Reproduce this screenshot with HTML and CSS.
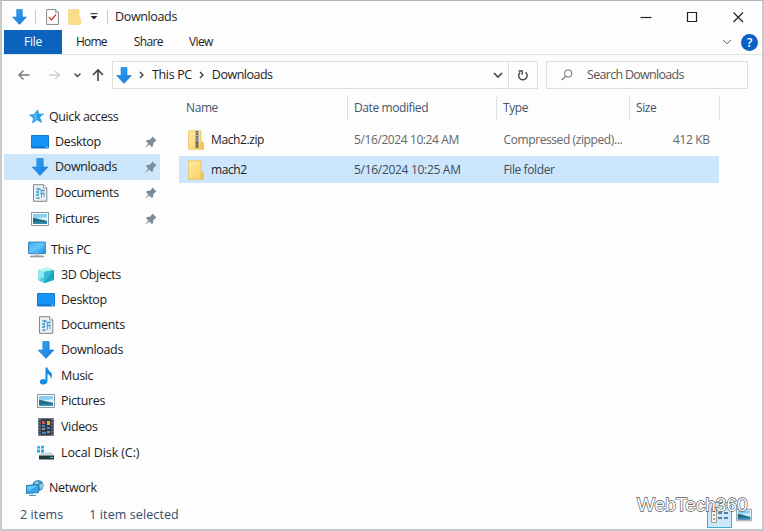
FILE: index.html
```html
<!DOCTYPE html>
<html lang="en">
<head>
<meta charset="utf-8">
<title>Downloads</title>
<link rel="stylesheet" href="styles.css">
</head>
<body>
<svg class="defs" width="0" height="0" aria-hidden="true">
  <defs>
    <linearGradient id="blue" x1="0" y1="0" x2="1" y2="1"><stop offset="0" stop-color="#35a5f5"/><stop offset="1" stop-color="#1479d8"/></linearGradient>
    <linearGradient id="gold" x1="0" y1="0" x2="1" y2="1"><stop offset="0" stop-color="#ffe9a2"/><stop offset="1" stop-color="#f7cf62"/></linearGradient>
    <linearGradient id="screen" x1="0" y1="0" x2="1" y2="1"><stop offset="0" stop-color="#3fa9f0"/><stop offset=".5" stop-color="#68c5fb"/><stop offset="1" stop-color="#168be0"/></linearGradient>
    <symbol id="down" viewBox="0 0 16 17"><path d="M5 .5h6v8h4.500L8 16.500.5 8.500H5z" fill="url(#blue)" stroke="#1c7fd0" stroke-width=".6"/></symbol>
    <symbol id="star" viewBox="0 0 15 15"><path d="M8.500.8l1.300 4.500 4.700-.4-3.800 3.200 2 5.400-4.700-2.800L3.600 14l.9-5L.6 6l4.700-.4z" fill="#239be9" stroke="#239be9" stroke-width=".7"/><path d="M8 3v7l-3 2 .6-4L3 6.500l3-.4z" fill="#54bcf6"/></symbol>
    <symbol id="desktop" viewBox="0 0 18 14"><path d="M.5.500h17v12.500H.500z" fill="#1595f5" stroke="#1678cf"/><path d="M1 12h13" stroke="#0e65b6"/><path d="M14 12h3" stroke="#5eb5f5"/></symbol>
    <symbol id="doc" viewBox="0 0 15 18"><path d="M1 .7h10l3.300 3.300v13.300H1z" fill="#e9eff2" stroke="#7d8990"/><path d="M11 .7V4h3.300" fill="#fff" stroke="#7d8990" stroke-width=".8"/><path d="M4 5h4M3.500 8h3M8 6.500h4M3.500 11h3M8 9.500h4M4 14h3" stroke="#3b91c5" stroke-width="1.300"/><path d="M6 5v6M9 6v8M11.500 9v4" stroke="#58aeda"/></symbol>
    <symbol id="picture" viewBox="0 0 18 14"><path d="M.5.500h17v13H.500z" fill="#f9fbfc" stroke="#8998a2"/><path d="M2 2h14v10H2z" fill="#8bcef4"/><path d="M2 5l5 1 9-1v4L8 7z" fill="#daeff7"/><path d="M2 6c4 0 8 2 14 3v3H2z" fill="#216d86"/><path d="M2 10h14v2H2z" fill="#3688b4"/></symbol>
    <symbol id="pc" viewBox="0 0 18 17"><path d="M.6.600h16.800v11.500H.600z" fill="url(#screen)" stroke="#3585b8"/><path d="M7 12h4v2H7z" fill="#b7c5cc"/><path d="M3 14h12l1.500 1.800H1.500z" fill="#8c9ba5"/></symbol>
    <symbol id="cube" viewBox="0 0 18 18"><path d="M1 4l9-3 7 3-7 3z" fill="#b8f3f6"/><path d="M1 4l6 2v11l-6-3z" fill="#4fd0dd"/><path d="M7 6l10-2v10L8 17H7z" fill="#18a6c1"/><path d="M1 4l6 2v5l-6 3z" fill="#92e8ec"/><path d="M7 6l10-2-5 6-5 7z" fill="#38bed3"/></symbol>
    <symbol id="music" viewBox="0 0 13 17"><path d="M6 .5h1.800c.2 3 4.700 4 4.300 7.500-.1 1.500-.8 2.500-1.600 3.300.7-2.800-.5-4.300-2.600-4.800v6.700c0 4.300-6.900 4.300-7.200 1.100C.5 11.500 4 10.600 6 12z" fill="#158ce3"/></symbol>
    <symbol id="video" viewBox="0 0 16 18"><path d="M.5.500h15v17H.500z" fill="#363b48" stroke="#71757c"/><path d="M2 1v16M14 1v16" stroke="#8c9096" stroke-width="1.200" stroke-dasharray="1.500 1.500"/><path d="M4 3h3v3H4z" fill="#c55854"/><path d="M9 3h3v4H9z" fill="#dfb14a"/><path d="M4 7h3v2H4zM9 9h3v2H9zM4 14h4v2H4z" fill="#3c85cf"/><path d="M4 10h3v2H4zM9 13h3v2H9z" fill="#8094a9"/></symbol>
    <symbol id="disk" viewBox="0 0 18 15"><path d="M0 1l3-.5V3H0zM4 .4L7 0v3H4zM0 4h3v3H0zM4 4h3v3.500H4z" fill="#1aafe9"/><path d="M4 7h11l2 3H2z" fill="#c9dbe0"/><path d="M2 10h15v4H2z" fill="#24383e"/><path d="M13 12h3" stroke="#48d6b1"/></symbol>
    <symbol id="network" viewBox="0 0 18 17"><circle cx="12" cy="6" r="5.600" fill="#3a8abe"/><path d="M8 3l4-2 1 3-3 2zM13 5l4-1v4l-3 2z" fill="#8ac5dd"/><path d="M.6 6l12-1v8l-12 1z" fill="#36a6e8" stroke="#227cb9"/><path d="M1 7l10-1-9 6z" fill="#6bc7f6"/><path d="M6 14v2M3 16h7" stroke="#5296b9"/></symbol>
    <symbol id="folder" viewBox="0 0 16 20"><path d="M.5.800h12.500v10l2.500 2v6.500H.500z" fill="url(#gold)" stroke="#e8bf59" stroke-width=".7"/><path d="M12.700 12v7h2.800v-6z" fill="#efc155"/></symbol>
    <symbol id="zip" viewBox="0 0 16 20"><path d="M.5.800h12.500v10l2.500 2v6.500H.500z" fill="url(#gold)" stroke="#e8bf59" stroke-width=".7"/><path d="M12.700 12v7h2.800v-6z" fill="#efc155"/><path d="M7 1h4v13H7z" fill="#b9b6a5"/><path d="M9 1v13" stroke="#5b6470" stroke-width="2" stroke-dasharray="1.500 1"/><path d="M7.500 12h3v6h-3z" fill="#78715d"/></symbol>
    <symbol id="pin" viewBox="0 0 12 12"><path d="M7.500.5l4 4-1.200.7-2 2-.3 3-1.200.8L4.300 8.500.6 11.600.3 11.300 3.300 7.500 1 5.200l.8-1.100 3-.3 2-2z" fill="#7c8b98"/></symbol>
  </defs>
</svg>
<div class="window">
  <header class="titlebar">
    <svg class="t-down"><use href="#down"/></svg>
    <i class="sep"></i>
    <svg class="t-check" viewBox="0 0 13 16"><path d="M.6.600h9l2.800 2.800v12H.600z" fill="#fff" stroke="#85888b"/><path d="M9.500.600v3h3" fill="none" stroke="#85888b" stroke-width=".7"/><path d="M3 8l2.500 3L10 5.500" fill="none" stroke="#d5432d" stroke-width="1.400"/></svg>
    <svg class="t-folder" viewBox="0 0 13 16" preserveAspectRatio="none"><path d="M.4.400h10.600v8.600l1.600 1v5.600H.400z" fill="#fbdc86" stroke="#efce75" stroke-width=".6"/></svg>
    <svg class="t-more" viewBox="0 0 8 7"><path d="M.5.700h7" stroke="#222"/><path d="M.7 3h6.600L4 6.500z" fill="#222"/></svg>
    <i class="sep sep-two"></i>
    <span class="title">Downloads</span>
    <svg class="caption" viewBox="0 0 106 16"><path d="M.5 8.500h11" stroke="#222" stroke-width="1.200"/><path d="M47.500 3.500h9v9h-9z" fill="none" stroke="#222" stroke-width="1.200"/><path d="M93.500 3.500l9.500 9.500m0-9.500l-9.500 9.500" fill="none" stroke="#222" stroke-width="1.200"/></svg>
  </header>
  <nav class="tabs">
    <span class="tab file">File</span><span class="tab home">Home</span><span class="tab share">Share</span><span class="tab view">View</span>
    <svg class="expand" viewBox="0 0 10 6"><path d="M1 .8l4 4 4-4" fill="none" stroke="#555"/></svg>
    <span class="help">?</span>
  </nav>
  <div class="address-row">
    <svg class="arrows" viewBox="0 0 88 16"><g fill="none" stroke-width="1.400"><path d="M12.500 8H2M6.500 3.500L2 8 6.500 12.500" stroke="#777"/><path d="M32 8h10M38 4l4.500 4-4.500 4" stroke="#cfcfcf"/><path d="M57.500 6.500l3 3 3-3" stroke="#444"/><path d="M81 14V3M76 8l5-5 5 5" stroke="#444" stroke-width="1.600"/></g></svg>
    <div class="address">
      <svg class="a-down"><use href="#down"/></svg>
      <svg class="chev" viewBox="0 0 5 8"><path d="M1 1l3 3-3 3" fill="none" stroke="#333" stroke-width="1.200"/></svg>
      <span class="crumb">This PC</span>
      <svg class="chev" viewBox="0 0 5 8"><path d="M1 1l3 3-3 3" fill="none" stroke="#333" stroke-width="1.200"/></svg>
      <span class="crumb last">Downloads</span>
      <svg class="drop" viewBox="0 0 10 7"><path d="M1 1l4 4 4-4" fill="none" stroke="#444" stroke-width="1.600"/></svg>
      <span class="refresh"><svg viewBox="0 0 12 13"><path d="M3 3.600a4.200 4.200 0 1 0 5.500-.3" fill="none" stroke="#444" stroke-width="1.400"/><path d="M1.500 2h3.700v3.700" fill="none" stroke="#444" stroke-width="1.300"/></svg></span>
    </div>
    <div class="search"><svg viewBox="0 0 12 12"><circle cx="7.200" cy="4.500" r="3.700" fill="none" stroke="#666"/><path d="M4.500 7.300L.7 11.200" stroke="#666" stroke-width="1.200"/></svg><span>Search Downloads</span></div>
  </div>
  <main class="body">
    <aside class="side">
      <div class="item quick h25"><svg class="i-star"><use href="#star"/></svg><span>Quick access</span></div>
      <div class="item fav h25"><svg class="ico"><use href="#desktop"/></svg><span>Desktop</span><svg class="pin"><use href="#pin"/></svg></div>
      <div class="item fav selected"><svg class="ico"><use href="#down"/></svg><span>Downloads</span><svg class="pin"><use href="#pin"/></svg></div>
      <div class="item fav"><svg class="ico"><use href="#doc"/></svg><span>Documents</span><svg class="pin"><use href="#pin"/></svg></div>
      <div class="item fav"><svg class="ico"><use href="#picture"/></svg><span>Pictures</span><svg class="pin"><use href="#pin"/></svg></div>
      <div class="item this-pc"><svg class="ico"><use href="#pc"/></svg><span>This PC</span></div>
      <div class="item sub h25"><svg class="ico"><use href="#cube"/></svg><span>3D Objects</span></div>
      <div class="item sub h25"><svg class="ico"><use href="#desktop"/></svg><span>Desktop</span></div>
      <div class="item sub h25"><svg class="ico"><use href="#doc"/></svg><span>Documents</span></div>
      <div class="item sub"><svg class="ico"><use href="#down"/></svg><span>Downloads</span></div>
      <div class="item sub h25"><svg class="ico"><use href="#music"/></svg><span>Music</span></div>
      <div class="item sub"><svg class="ico"><use href="#picture"/></svg><span>Pictures</span></div>
      <div class="item sub"><svg class="ico"><use href="#video"/></svg><span>Videos</span></div>
      <div class="item sub disk"><svg class="ico"><use href="#disk"/></svg><span>Local Disk (C:)</span></div>
      <div class="item network h25"><svg class="ico"><use href="#network"/></svg><span>Network</span></div>
    </aside>
    <section class="files">
      <div class="row head"><span class="name">Name</span><span>Date modified</span><span>Type</span><span>Size</span></div>
      <div class="row"><span class="name"><svg><use href="#zip"/></svg><b>Mach2.zip</b></span><span>5/16/2024 10:24 AM</span><span>Compressed (zipped)...</span><span class="size">412 KB</span></div>
      <div class="row picked"><span class="name"><svg><use href="#folder"/></svg><b>mach2</b></span><span class="later">5/16/2024 10:25 AM</span><span>File folder</span><span></span></div>
    </section>
  </main>
  <footer class="status">
    <span class="count">2 items</span><span class="chosen">1 item selected</span>
    <span class="mode"><svg viewBox="0 0 18 16"><path d="M.5.500h5v15h-5z" fill="#f7f4e9" stroke="#9a9c98"/><path d="M2 4h2M2 8h2M2 12h2" stroke="#b2a581" stroke-width="2"/><path d="M7 6h4M13 6h4M7 11h4M13 11h4" stroke="#345a86" stroke-width="1.500"/></svg></span>
    <svg class="thumbs"><use href="#picture"/></svg>
  </footer>
  <div class="watermark">WebTech360</div>
</div>
</body>
</html>
```
FILE: styles.css
```css
* { box-sizing: border-box; }
body { margin: 0; overflow: hidden; }
svg { display: block; flex: none; }
.defs { position: absolute; }
.window {
  position: relative;
  display: flex;
  flex-direction: column;
  width: 764px;
  height: 531px;
  border: 2px solid #c9c9c9;
  border-top: 1px solid #b5b5b5;
  background: #fdfdfd;
  color: #1c1c1c;
  font: 12.5px/18px "Open Sans", "Noto Sans", sans-serif;
  letter-spacing: -0.35px;
  white-space: nowrap;
}
.titlebar { display: flex; align-items: center; height: 29px; padding: 2px 18px 0 10px; }
.t-down { width: 15px; height: 16px; }
.sep { width: 1px; height: 14px; margin-left: 8px; background: #c8c8c8; }
.t-check { width: 13px; height: 16px; margin-left: 10px; }
.t-folder { width: 13px; height: 16px; margin-left: 9px; }
.t-more { width: 8px; height: 7px; margin-left: 9px; }
.sep-two { margin-left: 9px; }
.title { margin-left: 7px; }
.caption { width: 106px; height: 16px; margin-left: auto; margin-right: -2px; }
.tabs { display: flex; align-items: center; height: 25px; border-bottom: 1px solid #e2e2e2; }
.tab { font-size: 12px; letter-spacing: -0.6px; }
.tab.file { width: 58px; height: 24px; margin-left: 2px; background: #0b63be; color: #fff; text-align: center; line-height: 24px; letter-spacing: -0.2px; }
.home { margin-left: 14px; }
.tab.home { letter-spacing: -0.8px; }
.share { margin-left: 27px; }
.view { margin-left: 26px; }
.expand { width: 10px; height: 6px; margin-left: auto; margin-right: 9px; }
.help { width: 17px; height: 17px; margin-right: 4px; border-radius: 50%; background: #0a60c4; color: #fff; text-align: center; font-weight: 600; line-height: 17px; }
.address-row { display: flex; align-items: center; height: 40px; }
.arrows { width: 88px; height: 16px; margin-left: 15px; }
.address { display: flex; align-items: center; width: 426px; height: 28px; margin-left: 7px; border: 1px solid #dedede; }
.a-down { width: 16px; height: 17px; margin-left: 3px; }
.chev { width: 5px; height: 8px; margin-left: 7px; }
.crumb { margin-left: 8px; }
.crumb.last { letter-spacing: -0.5px; }
.drop { width: 10px; height: 7px; margin-left: auto; }
.refresh { display: flex; align-items: center; justify-content: center; width: 29px; height: 100%; margin-left: 5px; border-left: 1px solid #dedede; }
.refresh svg { width: 12px; height: 13px; }
.search { display: flex; align-items: center; width: 202px; height: 28px; margin-left: 8px; padding-left: 14px; border: 1px solid #dedede; color: #555; letter-spacing: -0.7px; }
.search svg { width: 12px; height: 12px; margin-right: 14px; }
.body { display: flex; height: 407px; }
.side { width: 158px; padding: 9px 0 0 2px; }
.item { display: flex; align-items: center; height: 26px; }
.h25 { height: 25px; }
.ico { width: 18px; height: 18px; }
.i-star { width: 15px; height: 15px; }
.quick { padding-left: 25px; gap: 5px; letter-spacing: -0.4px; }
.fav { padding-left: 27px; gap: 6px; }
.sub { padding-left: 33px; gap: 6px; }
.disk { letter-spacing: -0.1px; }
.selected { background: #cce6fc; }
.pin { width: 12px; height: 12px; margin-left: auto; margin-right: 3px; }
.this-pc { height: 24px; margin-top: 6px; padding-left: 24px; gap: 5px; }
.network { margin-top: 9px; padding-left: 22px; gap: 5px; letter-spacing: -0.3px; }
.files { width: 540px; margin-left: 19px; }
.row { display: grid; grid-template-columns: 175px 149.5px 130px 80px; align-items: center; height: 27px; color: #666; font-size: 12px; letter-spacing: -0.4px; }
.row b { color: #1c1c1c; font-weight: 400; }
.name { display: flex; align-items: center; padding-left: 9px; }
.name svg { width: 16px; height: 20px; margin-right: 7px; }
.head { height: 25px; margin-bottom: 6px; grid-template-columns: 169px 149px 133px 90px; align-items: start; color: #44546b; }
.head span { height: 25px; line-height: 26px; padding-left: 6px; border-right: 1px solid #e2e2e2; }
.head .name { padding-left: 7px; }
.picked { margin-top: 3px; background: #cbe6fd; color: #414b55; }
.later { letter-spacing: -0.3px; }
.size { text-align: right; padding-right: 4px; }
.status { display: flex; align-items: center; height: 27px; padding: 0 0 2px 18px; color: #344b68; letter-spacing: 0.1px; }
.chosen { margin-left: 26px; }
.mode { display: flex; align-items: center; justify-content: center; width: 25px; height: 26px; margin-left: auto; border: 1px solid #47a8df; background: #cce9fb; }
.mode svg { width: 18px; height: 16px; }
.thumbs { width: 16px; height: 14px; margin: 0 10px 0 4px; }
.watermark {
  position: absolute;
  left: 635px;
  top: 493px;
  color: #fff;
  font: 19px/22px "Liberation Sans", sans-serif;
  letter-spacing: 0;
  -webkit-text-stroke: 1.3px #555;
  paint-order: stroke fill;
}
```
